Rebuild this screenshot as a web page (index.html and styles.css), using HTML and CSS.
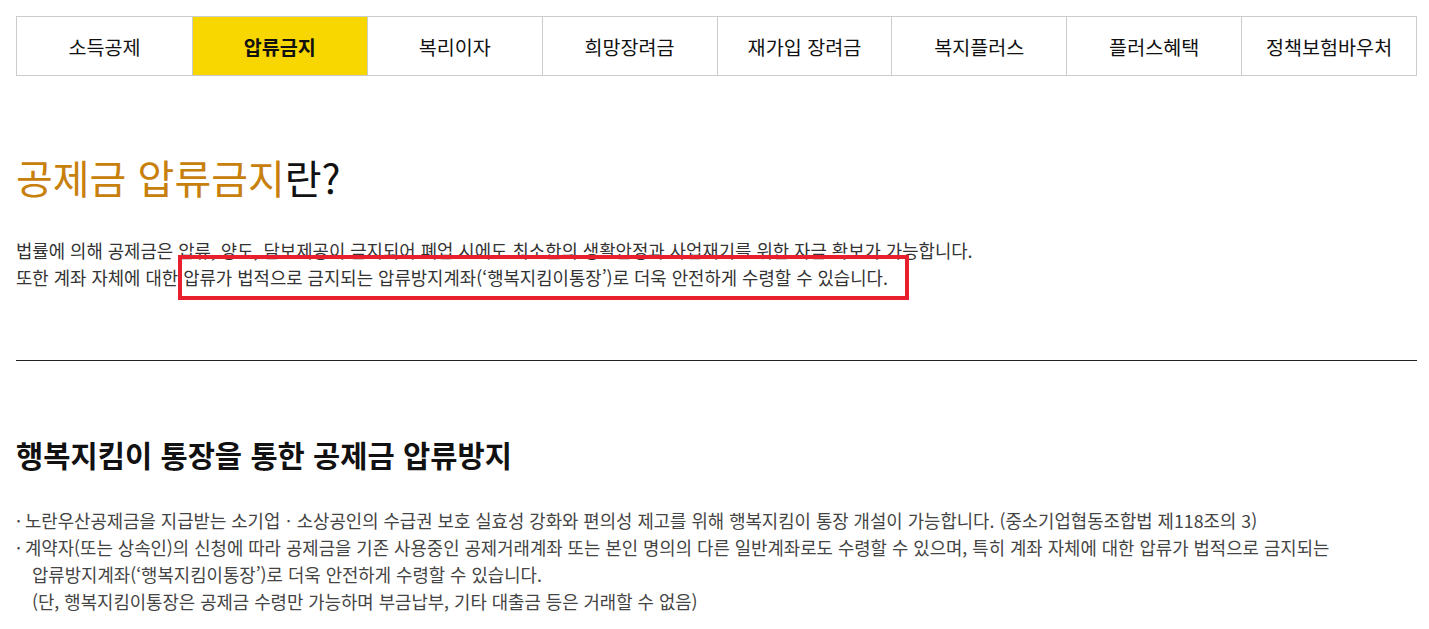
FILE: index.html
```html
<!DOCTYPE html>
<html lang="ko">
<head>
  <meta charset="UTF-8" />
  <title>공제금 압류금지</title>
  <link rel="stylesheet" href="styles.css">
</head>
<body>
  <div class="page">
    <ul class="tabs">
      <li><a href="#">소득공제</a></li>
      <li class="on"><a href="#">압류금지</a></li>
      <li><a href="#">복리이자</a></li>
      <li><a href="#">희망장려금</a></li>
      <li><a href="#">재가입 장려금</a></li>
      <li><a href="#">복지플러스</a></li>
      <li><a href="#">플러스혜택</a></li>
      <li><a href="#">정책보험바우처</a></li>
    </ul>

    <h1 class="title"><span class="point">공제금 압류금지</span>란?</h1>

    <div class="intro">
      <p>법률에 의해 공제금은 압류, 양도, 담보제공이 금지되어 폐업 시에도 최소한의 생활안정과 사업재기를 위한 자금 확보가 가능합니다.</p>
      <p>또한 계좌 자체에 대한 압류가 법적으로 금지되는 압류방지계좌(‘행복지킴이통장’)로 더욱 안전하게 수령할 수 있습니다.</p>
      <!-- highlight box -->
      <span class="mark"></span>
    </div>

    <hr class="line" />

    <h2 class="sub-title">행복지킴이 통장을 통한 공제금 압류방지</h2>

    <ul class="dot-list">
      <li>노란우산공제금을 지급받는 소기업ㆍ소상공인의 수급권 보호 실효성 강화와 편의성 제고를 위해 행복지킴이 통장 개설이 가능합니다. (중소기업협동조합법 제118조의 3)</li>
      <li>계약자(또는 상속인)의 신청에 따라 공제금을 기존 사용중인 공제거래계좌 또는 본인 명의의 다른 일반계좌로도 수령할 수 있으며, 특히 계좌 자체에 대한 압류가 법적으로 금지되는<br />
        압류방지계좌(‘행복지킴이통장’)로 더욱 안전하게 수령할 수 있습니다.<br />
        (단, 행복지킴이통장은 공제금 수령만 가능하며 부금납부, 기타 대출금 등은 거래할 수 없음)</li>
    </ul>
  </div>
</body>
</html>
```

FILE: styles.css
```css
body {
  margin: 0;
  padding: 0;
  font-family: "Noto Sans CJK KR", "Noto Sans", sans-serif;
  color: #333;
  background: #fff;
}

.page {
  padding: 16px 12px 16px 16px;
}

ul {
  margin: 0;
  padding: 0;
  list-style: none;
}

.tabs {
  display: grid;
  grid-template-columns: repeat(8, 1fr);
  border: 1px solid #ccc;
}

.tabs li {
  border-left: 1px solid #ccc;
}

.tabs li:first-child {
  border-left: none;
}

.tabs a {
  display: flex;
  justify-content: center;
  align-items: center;
  height: 58px;
  font-size: 19.6px;
  color: #111;
  text-decoration: none;
}

.tabs .on a {
  background: #f8d600;
  font-weight: bold;
}

.title {
  margin: 76px 0 0;
  font-size: 40px;
  line-height: 50px;
  font-weight: normal;
  color: #111;
}

.title .point {
  color: #c8800c;
}

.intro {
  position: relative;
  margin-top: 35px;
}

.intro p {
  margin: 0;
  font-size: 17.8px;
  line-height: 27px;
  color: #333;
}

.mark {
  position: absolute;
  left: 162px;
  top: 18px;
  width: 723px;
  height: 37px;
  border: 4px solid #e8202e;
}

.line {
  margin: 69px 0 0;
  border: none;
  border-top: 1px solid #222;
}

.sub-title {
  margin: 76px 0 0;
  font-size: 29.6px;
  line-height: 36px;
  font-weight: bold;
  color: #111;
}

.dot-list {
  margin-top: 34px;
}

.dot-list li {
  padding-left: 16px;
  text-indent: -16px;
  font-size: 17.8px;
  line-height: 27px;
  color: #444;
}

.dot-list li::before {
  content: "·";
  display: inline-block;
  width: 9px;
  text-indent: 0;
}
```
